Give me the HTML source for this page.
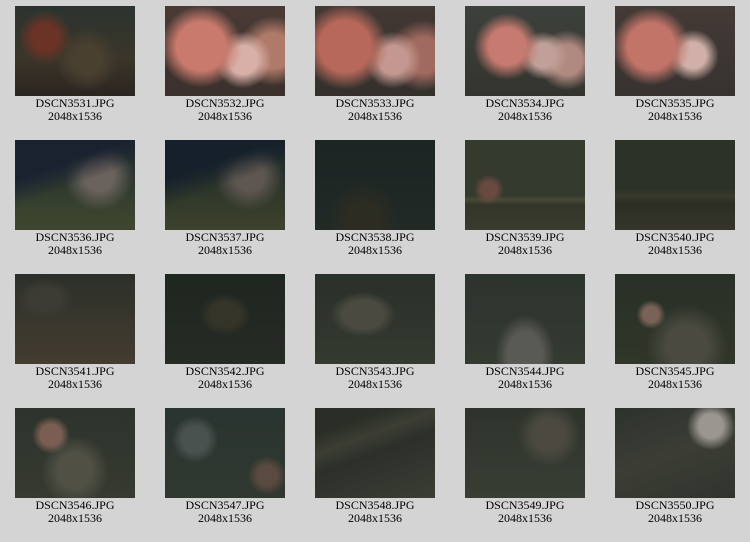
<!DOCTYPE html>
<html><head><meta charset="utf-8"><style>
html,body{margin:0;padding:0;width:750px;height:542px;background:#d4d4d4;overflow:hidden}
.c{position:absolute;width:150px;text-align:center;font-family:"Liberation Serif",serif;font-size:12px;line-height:13px;color:#000}
.c .i{width:120px;height:90px;margin:0 auto 1px auto}
</style></head><body>
<div id="g"></div>
<script>
const bg=[
"radial-gradient(circle at 25% 35%,#6a3325 0 12%,transparent 25%),radial-gradient(circle at 60% 60%,#4a4030 0 15%,transparent 35%),linear-gradient(180deg,#2c3430,#3a3528 60%,#2a2520)",
"radial-gradient(circle at 30% 45%,#c97a6c 0 25%,transparent 42%),radial-gradient(circle at 65% 60%,#d8b0a8 0 15%,transparent 30%),radial-gradient(circle at 90% 50%,#b07a6a 0 15%,transparent 30%),linear-gradient(#4a3a36,#3a302c)",
"radial-gradient(circle at 25% 45%,#b8685a 0 25%,transparent 42%),radial-gradient(circle at 65% 60%,#c49890 0 15%,transparent 30%),radial-gradient(circle at 90% 55%,#a06a60 0 15%,transparent 30%),linear-gradient(#423834,#33302c)",
"radial-gradient(circle at 35% 45%,#c77a70 0 20%,transparent 36%),radial-gradient(circle at 65% 55%,#c0a098 0 13%,transparent 26%),radial-gradient(circle at 85% 60%,#b08a80 0 13%,transparent 26%),linear-gradient(#3c413c,#34342e)",
"radial-gradient(circle at 30% 45%,#c27468 0 24%,transparent 40%),radial-gradient(circle at 65% 55%,#d0b0a8 0 14%,transparent 28%),linear-gradient(#443a36,#363230)",
"linear-gradient(160deg,#1a2230 0 30%,transparent 50%),radial-gradient(circle at 70% 40%,#6a625c 0 15%,transparent 35%),linear-gradient(#1c2830,#36402e 70%,#40462e)",
"linear-gradient(160deg,#15202a 0 30%,transparent 50%),radial-gradient(circle at 70% 40%,#5e5650 0 15%,transparent 35%),linear-gradient(#1a262c,#323a2a 70%,#3c422c)",
"radial-gradient(ellipse at 40% 90%,#2c2c22 0 15%,transparent 35%),linear-gradient(#1c2424,#222a26)",
"radial-gradient(circle at 20% 55%,#6a4a40 0 7%,transparent 14%),linear-gradient(180deg,#343a2e 0 62%,#4a4a38 66%,#34362a 72%,#3a3a2e)",
"linear-gradient(180deg,#2c3228 0 55%,#3a3a2c 62%,#2c2e24 70%,#34342a)",
"radial-gradient(ellipse at 25% 28%,#3c3c34 0 12%,transparent 22%),linear-gradient(#2c302a,#443c30)",
"radial-gradient(ellipse at 50% 45%,#343428 0 18%,transparent 30%),linear-gradient(#1e2620,#262c24)",
"radial-gradient(ellipse at 40% 45%,#4a4a40 0 20%,transparent 32%),linear-gradient(#2a302a,#343a30)",
"radial-gradient(ellipse at 50% 90%,#5a5a54 0 20%,transparent 35%),linear-gradient(#2c342e,#343a30)",
"radial-gradient(circle at 30% 45%,#7a6258 0 8%,transparent 15%),radial-gradient(ellipse at 60% 80%,#4a4a40 0 20%,transparent 40%),linear-gradient(#283028,#303628)",
"radial-gradient(circle at 30% 30%,#7a5e54 0 10%,transparent 18%),radial-gradient(ellipse at 50% 70%,#505044 0 20%,transparent 40%),linear-gradient(#2c342c,#363a30)",
"radial-gradient(circle at 25% 35%,#4a5250 0 12%,transparent 22%),radial-gradient(circle at 85% 75%,#5a4a40 0 8%,transparent 16%),linear-gradient(#2a3430,#303830)",
"linear-gradient(160deg,#2a2e26 0 20%,#3c3e34 35%,#2c302a 50%,#3a3e34)",
"radial-gradient(circle at 70% 30%,#4c4a40 0 15%,transparent 30%),linear-gradient(#2e342c,#383e34)",
"radial-gradient(circle at 80% 20%,#9a9690 0 10%,transparent 20%),linear-gradient(160deg,#2c322c,#3c3e36 50%,#30342c)"];
let h="";
for(let r=0;r<4;r++)for(let c=0;c<5;c++){const n=r*5+c;
h+=`<div class="c" style="left:${c*150}px;top:${6+r*134}px"><div class="i" style="background:${bg[n]}"></div>DSCN${3531+n}.JPG<br>2048x1536</div>`;}
document.getElementById("g").innerHTML=h;
</script>
</body></html>
